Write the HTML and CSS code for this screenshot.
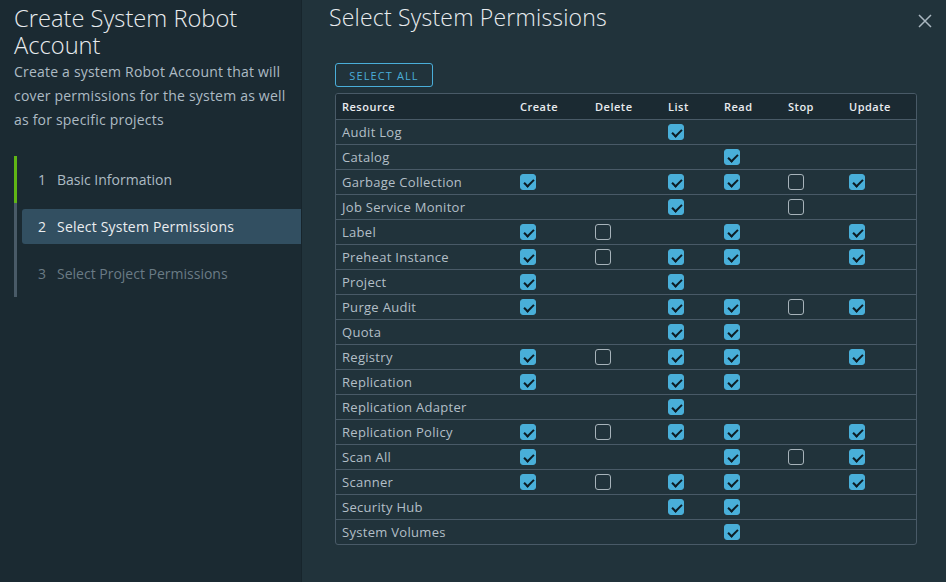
FILE: index.html
```html
<!DOCTYPE html>
<html>
<head>
<meta charset="utf-8">
<link rel="stylesheet" href="styles.css">
</head>
<body>
<div class="modal">
  <aside class="sidebar">
    <h1 class="side-title">Create System Robot Account</h1>
    <p class="side-desc">Create a system Robot Account that will cover permissions for the system as well as for specific projects</p>
    <ul class="steps">
      <li class="step done"><div class="step-link"><span class="num">1</span>Basic Information</div></li>
      <li class="step current"><div class="step-link"><span class="num">2</span>Select System Permissions</div></li>
      <li class="step disabled"><div class="step-link"><span class="num">3</span>Select Project Permissions</div></li>
    </ul>
  </aside>
  <main class="main">
    <div class="main-head">
      <h2 class="main-title">Select System Permissions</h2>
      <button class="close" aria-label="Close"><svg width="14" height="14" viewBox="0 0 14 14"><path d="M1 1 L13 13 M13 1 L1 13" stroke="#aab7c0" stroke-width="1.5" fill="none"/></svg></button>
    </div>
    <div class="content">
      <button class="btn-outline">Select All</button>
      <div class="grid">
        <div class="row head"><div>Resource</div><div>Create</div><div>Delete</div><div>List</div><div>Read</div><div>Stop</div><div>Update</div></div>
        <div class="row"><div>Audit Log</div><div></div><div></div><div><span class="cb on"></span></div><div></div><div></div><div></div></div>
        <div class="row"><div>Catalog</div><div></div><div></div><div></div><div><span class="cb on"></span></div><div></div><div></div></div>
        <div class="row"><div>Garbage Collection</div><div><span class="cb on"></span></div><div></div><div><span class="cb on"></span></div><div><span class="cb on"></span></div><div><span class="cb"></span></div><div><span class="cb on"></span></div></div>
        <div class="row"><div>Job Service Monitor</div><div></div><div></div><div><span class="cb on"></span></div><div></div><div><span class="cb"></span></div><div></div></div>
        <div class="row"><div>Label</div><div><span class="cb on"></span></div><div><span class="cb"></span></div><div></div><div><span class="cb on"></span></div><div></div><div><span class="cb on"></span></div></div>
        <div class="row"><div>Preheat Instance</div><div><span class="cb on"></span></div><div><span class="cb"></span></div><div><span class="cb on"></span></div><div><span class="cb on"></span></div><div></div><div><span class="cb on"></span></div></div>
        <div class="row"><div>Project</div><div><span class="cb on"></span></div><div></div><div><span class="cb on"></span></div><div></div><div></div><div></div></div>
        <div class="row"><div>Purge Audit</div><div><span class="cb on"></span></div><div></div><div><span class="cb on"></span></div><div><span class="cb on"></span></div><div><span class="cb"></span></div><div><span class="cb on"></span></div></div>
        <div class="row"><div>Quota</div><div></div><div></div><div><span class="cb on"></span></div><div><span class="cb on"></span></div><div></div><div></div></div>
        <div class="row"><div>Registry</div><div><span class="cb on"></span></div><div><span class="cb"></span></div><div><span class="cb on"></span></div><div><span class="cb on"></span></div><div></div><div><span class="cb on"></span></div></div>
        <div class="row"><div>Replication</div><div><span class="cb on"></span></div><div></div><div><span class="cb on"></span></div><div><span class="cb on"></span></div><div></div><div></div></div>
        <div class="row"><div>Replication Adapter</div><div></div><div></div><div><span class="cb on"></span></div><div></div><div></div><div></div></div>
        <div class="row"><div>Replication Policy</div><div><span class="cb on"></span></div><div><span class="cb"></span></div><div><span class="cb on"></span></div><div><span class="cb on"></span></div><div></div><div><span class="cb on"></span></div></div>
        <div class="row"><div>Scan All</div><div><span class="cb on"></span></div><div></div><div></div><div><span class="cb on"></span></div><div><span class="cb"></span></div><div><span class="cb on"></span></div></div>
        <div class="row"><div>Scanner</div><div><span class="cb on"></span></div><div><span class="cb"></span></div><div><span class="cb on"></span></div><div><span class="cb on"></span></div><div></div><div><span class="cb on"></span></div></div>
        <div class="row"><div>Security Hub</div><div></div><div></div><div><span class="cb on"></span></div><div><span class="cb on"></span></div><div></div><div></div></div>
        <div class="row"><div>System Volumes</div><div></div><div></div><div></div><div><span class="cb on"></span></div><div></div><div></div></div>
      </div>
    </div>
  </main>
</div>
</body>
</html>
```
FILE: styles.css
```css
* { box-sizing: border-box; }
html, body { margin: 0; padding: 0; }
body {
  font-family: "Open Sans", "DejaVu Sans", sans-serif;
  background: #21333b;
  width: 946px;
  height: 582px;
  overflow: hidden;
}
.modal {
  display: flex;
  height: 582px;
}
.sidebar {
  width: 302px;
  flex: none;
  background: #1b2a32;
  border-right: 1px solid #17252c;
  padding: 5px 0 0 14px;
}
.side-title {
  margin: 0;
  font-size: 23.7px;
  font-weight: 300;
  line-height: 27px;
  color: #e9ecef;
}
.side-desc {
  margin: 1px 0 0;
  font-size: 14px;
  line-height: 24px;
  color: #adbbc4;
  letter-spacing: 0.2px;
  padding-right: 8px;
}
.steps {
  list-style: none;
  margin: 24px 0 0;
  padding: 0;
}
.step {
  border-left: 3px solid #495a67;
  padding: 6px 0 6px 5px;
}
.step.done { border-left-color: #60b515; }
.step-link {
  height: 35px;
  display: flex;
  align-items: center;
  padding-left: 16px;
  font-size: 14px;
  color: #adbbc4;
  border-radius: 3px 0 0 3px;
}
.step .num { width: 19px; }
.step.current .step-link {
  background: #324f61;
  color: #eaedf0;
  font-weight: 500;
  letter-spacing: 0.2px;
}
.step.disabled .step-link { color: #6a7b85; }
.main {
  flex: 1;
  display: flex;
  flex-direction: column;
}
.main-head {
  display: flex;
  justify-content: space-between;
  align-items: flex-start;
  padding: 2px 14px 0 27px;
}
.main-title {
  margin: 0;
  font-size: 23px;
  font-weight: 300;
  line-height: 30px;
  letter-spacing: 0.2px;
  color: #e9ecef;
}
.close {
  margin-top: 12px;
  background: none;
  border: 0;
  padding: 0;
  width: 14px;
  height: 14px;
  display: flex;
}
.content {
  padding: 31px 29px 0 33px;
}
.btn-outline {
  display: block;
  height: 24px;
  padding: 0 12px;
  border: 1px solid #4aaed9;
  border-radius: 3px;
  background: transparent;
  color: #4aaed9;
  font-family: "Open Sans", "DejaVu Sans", sans-serif;
  font-size: 11px;
  letter-spacing: 1.1px;
  text-transform: uppercase;
  width: 98px;
}
.grid {
  margin-top: 6px;
  border: 1px solid #495a67;
  border-radius: 3px;
  overflow: hidden;
}
.row {
  display: grid;
  grid-template-columns: 178px 75px 73px 56px 64px 61px 73px;
  height: 25px;
  align-items: center;
  border-top: 1px solid #495a67;
  font-size: 13px;
  letter-spacing: 0.3px;
  color: #b3bfc7;
}
.row > div {
  padding-left: 6px;
  display: flex;
  align-items: center;
}
.row.head {
  border-top: 0;
  background: #1b2a32;
  font-size: 11px;
  font-weight: 600;
  color: #e9ecef;
  letter-spacing: 0.5px;
}
.cb {
  width: 16px;
  height: 16px;
  border-radius: 3px;
  border: 1px solid #a7b3ba;
  position: relative;
  display: block;
}
.cb.on {
  background: #49afd9;
  border-color: #49afd9;
}
.cb.on::after {
  content: "";
  position: absolute;
  left: 5px;
  top: 1.5px;
  width: 4px;
  height: 8px;
  border-right: 2.5px solid #0d1c24;
  border-bottom: 2.5px solid #0d1c24;
  transform: rotate(45deg);
}
```
